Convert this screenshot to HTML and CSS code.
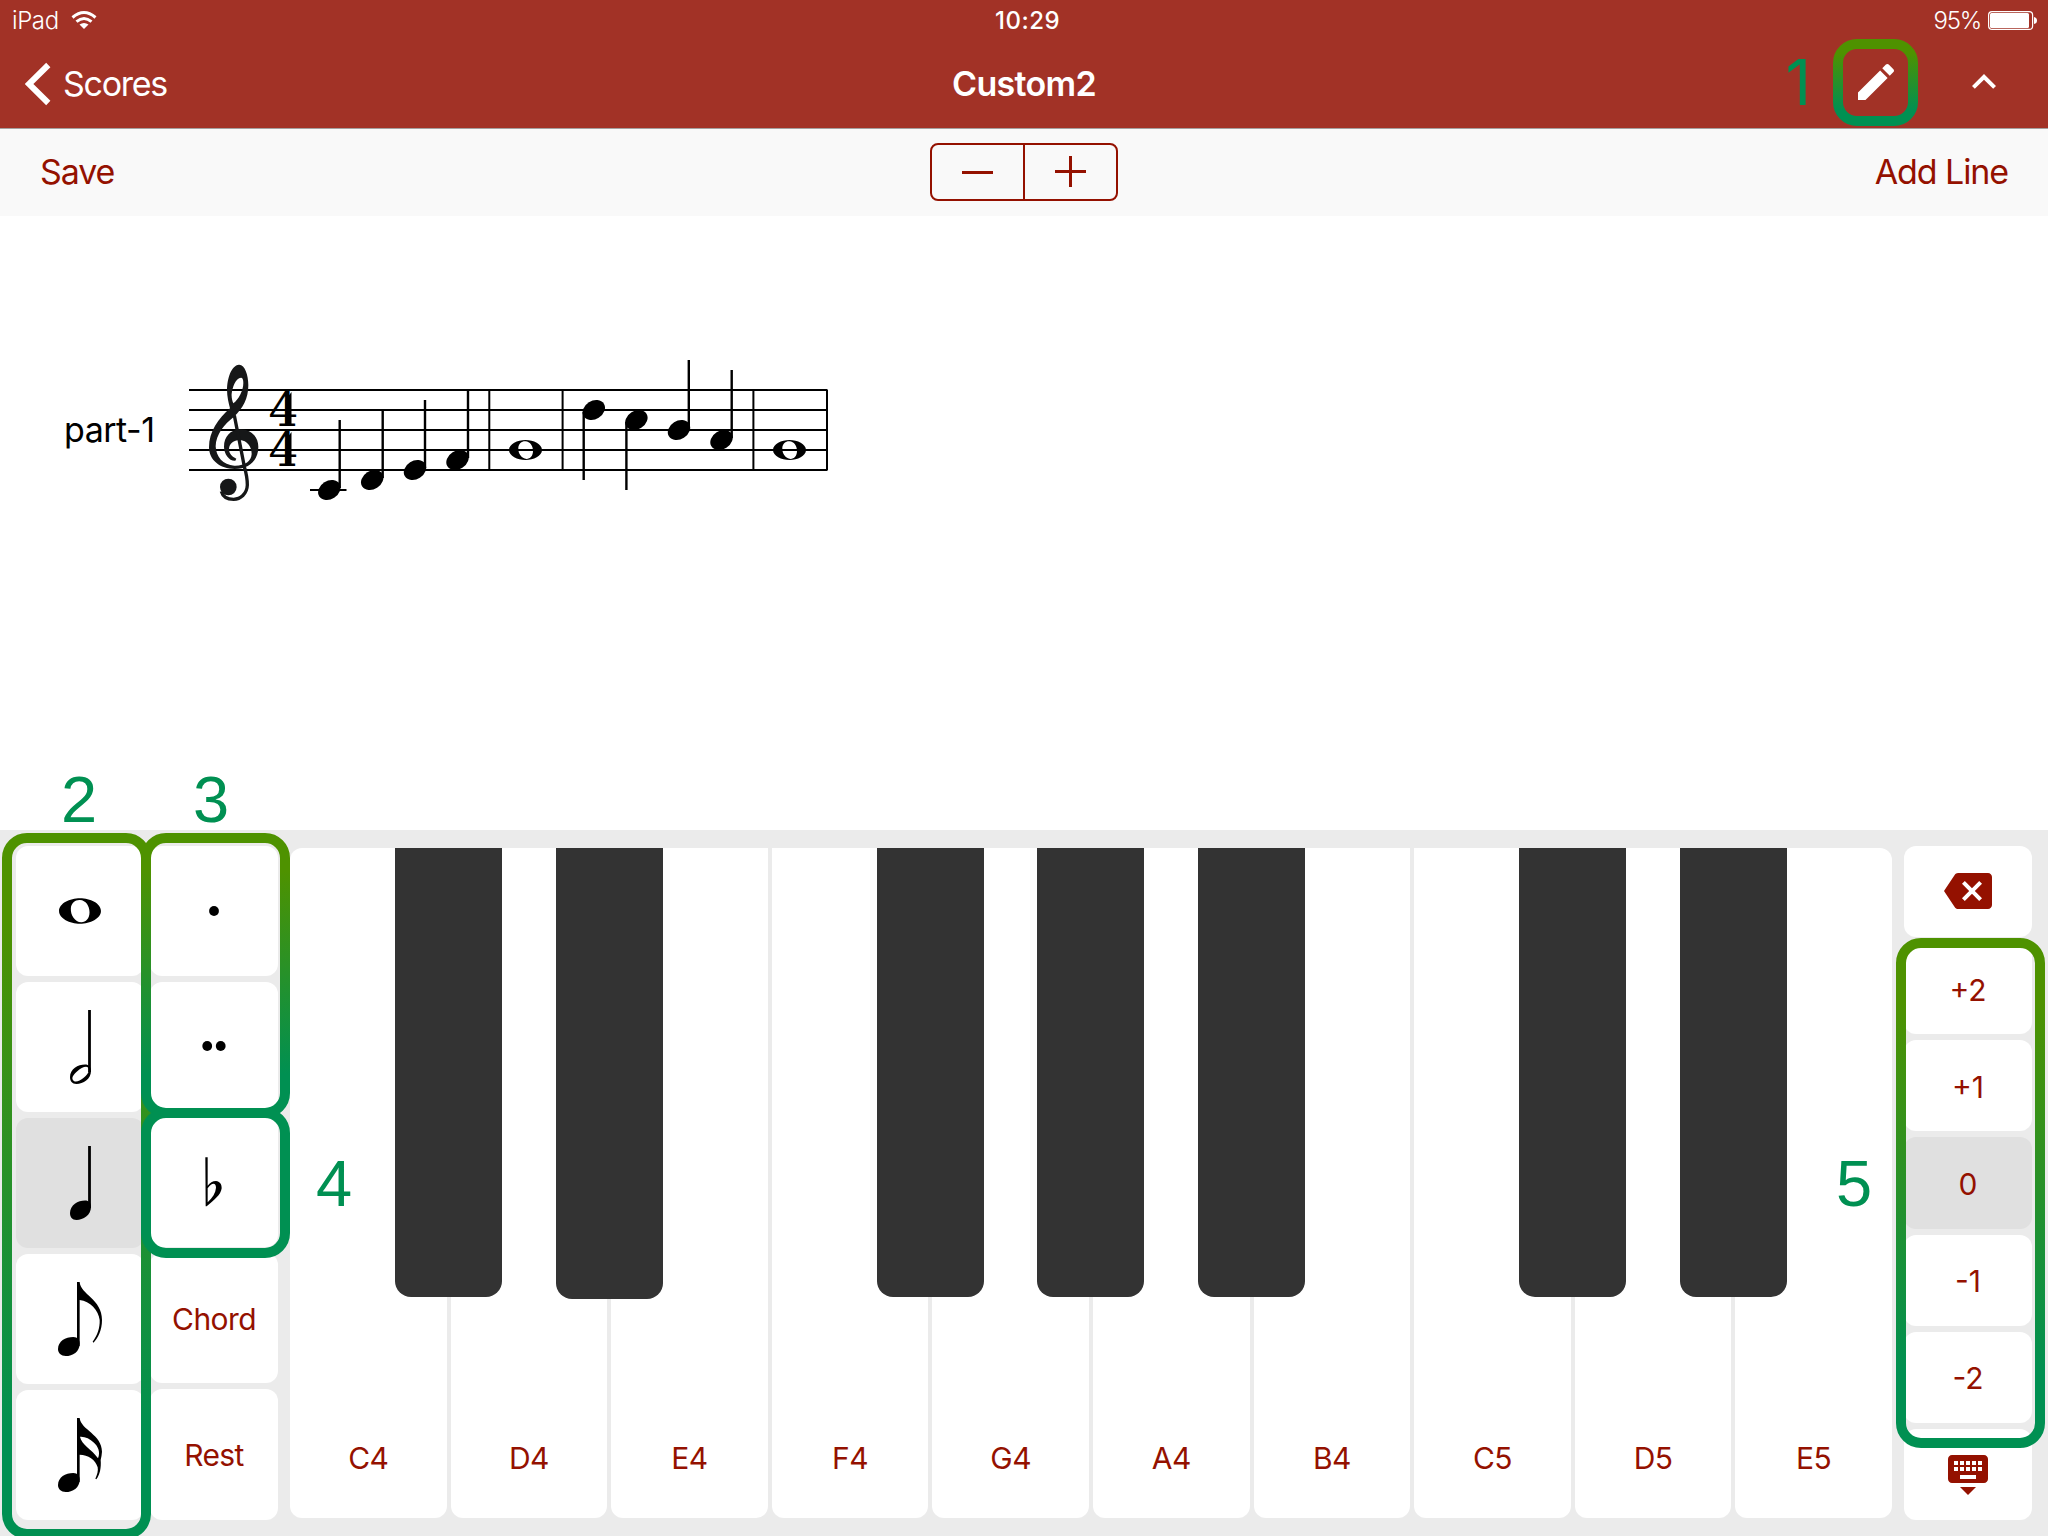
FILE: index.html
```html
<!DOCTYPE html>
<html lang="en">
<head>
<meta charset="utf-8">
<title>Custom2</title>
<link rel="stylesheet" href="styles.css">
</head>
<body>
<svg class="defs" width="0" height="0" aria-hidden="true">
  <defs>
    <ellipse id="head" rx="11.9" ry="9.200" transform="rotate(-32)"/>
    <path id="whole" fill-rule="evenodd" d="M-16.500 0C-16.500-6-8-10 0-10S16.500-6 16.500 0 8 10 0 10-16.500 6-16.500 0ZM-7.200-2C-7-6.500-3.500-9 0-8.700 4.500-8.500 7.500-4 7.500 1 7.500 6 4.500 9 1 8.900-4 8.500-7.500 3.500-7.200-2Z"/>
    <linearGradient id="mark" x1="0" y1="0" x2="0" y2="1">
      <stop offset=".12" stop-color="#4e9200"/>
      <stop offset=".86" stop-color="#009052"/>
    </linearGradient>
  </defs>
</svg>
<div class="app">
  <header class="header">
    <div class="status">
      <div class="status-left"><span class="device">iPad</span>
        <svg class="wifi" width="26" height="20" viewBox="0 0 26 20"><g fill="none" stroke="#fff" stroke-width="3"><path d="M1.500 7.500Q13-2.500 24.500 7.500"/><path d="M5.500 11.700Q13 5.200 20.500 11.700"/></g><path fill="#fff" d="M8.500 14.600Q13 11.400 17.500 14.600L13 19Z"/></svg>
      </div>
      <div class="clock">10:29</div>
      <div class="status-right"><span class="percent">95%</span>
        <svg width="50" height="20" viewBox="0 0 50 20"><rect x=".6" y=".6" width="44" height="17.800" rx="3.500" fill="none" stroke="#fff" stroke-width="1.200"/><rect x="2" y="2" width="39" height="15" rx="1.500" fill="#fff"/><path d="M46 6q3 .5 3 3.500t-3 3.500z" fill="#fff"/></svg>
      </div>
    </div>
    <nav class="nav">
      <a class="back"><svg width="26" height="44" viewBox="0 0 26 44"><path d="M23.300 3L4 22l19.300 19" fill="none" stroke="#fff" stroke-width="6"/></svg><span>Scores</span></a>
      <h1 class="title">Custom2</h1>
      <div class="nav-actions">
        <svg width="48" height="48" viewBox="0 0 24 24" fill="#fff"><path d="M3 17.250V21h3.750L17.810 9.940l-3.750-3.750L3 17.250zM20.710 7.040c.39-.39.39-1.020 0-1.410l-2.340-2.340c-.39-.39-1.020-.39-1.410 0l-1.830 1.830 3.750 3.750 1.830-1.830z"/></svg>
        <svg width="48" height="48" viewBox="0 0 24 24" fill="#fff"><path d="M12 8l-6 6 1.410 1.410L12 10.830l4.590 4.580L18 14z"/></svg>
      </div>
    </nav>
  </header>

  <div class="toolbar">
    <button class="link save">Save</button>
    <div class="stepper">
      <button><svg width="32" height="32"><path d="M0 17.500h31" stroke="#941100" stroke-width="3"/></svg></button>
      <button><svg width="32" height="32"><path d="M0 16.500h31M15.500 1v31" stroke="#941100" stroke-width="3"/></svg></button>
    </div>
    <button class="link add">Add Line</button>
  </div>

  <main class="score">
    <div class="part">part-1</div>
    <svg width="660" height="160" viewBox="180 350 660 160">
      <g stroke="#000" stroke-width="2" fill="none">
        <path d="M189 390H827.500M189 410H827.500M189 430H827.500M189 450H827.500M189 470H827.500M310 490H346.500"/>
        <path d="M489.300 390V470M562.600 390V470M753.400 390V470M827 390V470"/>
        <path stroke-width="2.400" d="M339.700 420V488M382.700 410.500V478M425 400V468M468 390V458M583.700 412V480M626.400 422V490M688.800 360V428M731.700 370V438"/>
      </g>
      <g>
        <use href="#head" x="329.300" y="490"/><use href="#head" x="372.200" y="480"/><use href="#head" x="415" y="470"/><use href="#head" x="457.500" y="460"/>
        <use href="#head" x="593.800" y="410"/><use href="#head" x="636.400" y="420"/><use href="#head" x="679" y="430"/><use href="#head" x="721.500" y="440"/>
        <use href="#whole" x="525.500" y="450"/><use href="#whole" x="789.500" y="450"/>
      </g>
      <g transform="translate(50 350) scale(.33333)" fill="#161718">
        <path fill-rule="evenodd" d="M567 44C543 46 531 88 531 118C531 141 536 160 540 175C505 207 477 244 477 292C477 330 510 357 554 357C598 357 625 330 625 291C625 259 602 238 570 238C541 239 522 261 522 290C522 313 539 334 556 332L559 326C546 320 537 311 537 297C538 281 551 270 569 270C592 271 605 290 605 312C604 334 584 348 553 347C519 346 498 320 497 289C498 253 523 222 552 200C579 175 595 145 595 106C595 74 584 43 567 44ZM573 83C557 84 547 112 545 131C544 143 547 153 550 160C566 148 580 122 580 99C580 89 578 83 573 83Z"/>
        <path d="M553 196L583 350Q592 380 592 405C591 432 571 448 551 448C532 448 518 439 514 424" fill="none" stroke="#161718" stroke-width="10"/>
        <ellipse cx="535" cy="411" rx="25" ry="25"/>
      </g>
      <g class="meter"><text x="268.500" y="426" textLength="30" lengthAdjust="spacingAndGlyphs">4</text><text x="268.500" y="466" textLength="30" lengthAdjust="spacingAndGlyphs">4</text></g>
      <path d="M291.500 392v33h-6v-25zM291.500 432v33h-6v-25z"/>
    </svg>
  </main>

  <section class="keyboard">
    <div class="column">
      <button class="key"><svg class="glyph" viewBox="0 0 128 130"><use href="#whole" transform="translate(64 65) scale(1.270)"/></svg></button>
      <button class="key"><svg class="glyph" viewBox="0 0 128 130"><path d="M73.500 28V90" stroke="#000" stroke-width="2.800"/><path fill-rule="evenodd" d="M54 95C54 87 62 82.500 69 82.500C73 82.500 75 85 75 89C75 97 67 102 60.500 102C56 102 54 99 54 95ZM57 98C59 101 63 99.500 68 95.500C73 91 74 88 72 85.500C70 83.500 65 86 61 89.500C57 93 55.500 96 57 98Z"/></svg></button>
      <button class="key active"><svg class="glyph" viewBox="0 0 128 130"><path d="M73.500 28V90" stroke="#000" stroke-width="2.800"/><path d="M54 95C54 87 62 82.500 69 82.500C73 82.500 75 85 75 89C75 97 67 102 60.500 102C56 102 54 99 54 95Z"/></svg></button>
      <button class="key"><svg class="glyph" viewBox="0 0 128 130"><g transform="translate(-16 -154) scale(.33333)"><path d="M231 546H239C241 583 306 597 306 660C306 690 294 716 280 728L278 725C292 706 300 684 299 660C296 631 270 603 239 600V738H231Z"/><path d="M174 747C174 724 196 711 220 711C233 711 239 720 239 731C239 755 218 768 197 768C183 768 174 759 174 747Z"/></g></svg></button>
      <button class="key"><svg class="glyph" viewBox="0 0 128 130"><g transform="translate(-16 -290) scale(.33333)"><path fill-rule="evenodd" d="M231 954H239C243 990 306 1003 306 1055Q305 1068 302 1080C304 1102 300 1124 289 1138L286 1136C292 1124 295 1112 293 1102C287 1079 264 1064 239 1064V1146H231ZM240 1010C244 1034 276 1048 294 1075C302 1056 294 1039 282 1028C269 1015 255 1009 240 1010Z"/><path d="M174 1155C174 1132 196 1119 220 1119C233 1119 239 1128 239 1139C239 1163 218 1176 197 1176C183 1176 174 1167 174 1155Z"/></g></svg></button>
    </div>
    <div class="column">
      <button class="key"><svg class="glyph" viewBox="0 0 128 130"><circle cx="64" cy="65" r="4.900"/></svg></button>
      <button class="key"><svg class="glyph" viewBox="0 0 128 130"><circle cx="57.200" cy="65" r="4.900"/><circle cx="70.700" cy="65" r="4.900"/></svg></button>
      <button class="key"><svg class="glyph" viewBox="0 0 128 130"><g transform="translate(-150 -18) scale(.33333)"><path fill-rule="evenodd" d="M616 175H623V260Q633 246 648 246C659 247 666 256 665 268C663 287 642 304 620 322H617ZM623 268V310C638 296 647 281 648 266C648 248 633 252 623 268Z"/></g></svg></button>
      <button class="key word">Chord</button>
      <button class="key word">Rest</button>
    </div>
    <div class="piano">
      <div class="white"><span>C4</span><i class="black"></i></div>
      <div class="white"><span>D4</span><i class="black long"></i></div>
      <div class="white"><span>E4</span></div>
      <div class="white"><span>F4</span><i class="black"></i></div>
      <div class="white"><span>G4</span><i class="black"></i></div>
      <div class="white"><span>A4</span><i class="black"></i></div>
      <div class="white"><span>B4</span></div>
      <div class="white"><span>C5</span><i class="black"></i></div>
      <div class="white"><span>D5</span><i class="black"></i></div>
      <div class="white"><span>E5</span></div>
    </div>
    <div class="column">
      <button class="key tool"><svg width="48" height="48" viewBox="0 0 24 24" fill="#941100"><path d="M22 3H7c-.69 0-1.230.35-1.590.88L0 12l5.410 8.110c.36.53.9.89 1.590.89h15c1.100 0 2-.9 2-2V5c0-1.100-.9-2-2-2zm-3 12.590L17.590 17 14 13.410 10.410 17 9 15.590 12.590 12 9 8.410 10.410 7 14 10.590 17.590 7 19 8.410 15.410 12 19 15.590z"/></svg></button>
      <button class="key octave">+2</button>
      <button class="key octave">+1</button>
      <button class="key octave active">0</button>
      <button class="key octave">-1</button>
      <button class="key octave">-2</button>
      <button class="key tool"><svg width="48" height="48" viewBox="0 0 24 24" fill="#941100"><path d="M20 3H4c-1.100 0-1.990.9-1.990 2L2 15c0 1.100.9 2 2 2h16c1.100 0 2-.9 2-2V5c0-1.100-.9-2-2-2zm-9 3h2v2h-2V6zm0 3h2v2h-2V9zM8 6h2v2H8V6zm0 3h2v2H8V9zm-1 2H5V9h2v2zm0-3H5V6h2v2zm9 7H8v-2h8v2zm0-4h-2V9h2v2zm0-3h-2V6h2v2zm3 3h-2V9h2v2zm0-3h-2V6h2v2zm-7 15l4-4H8l4 4z"/></svg></button>
    </div>
  </section>

  <svg class="annotations" width="2048" height="1536" viewBox="0 0 2048 1536">
    <g fill="none" stroke="url(#mark)" stroke-width="10">
      <rect x="1838" y="44" width="75" height="77" rx="19"/>
      <rect x="7" y="838" width="139" height="696" rx="20"/>
      <rect x="146" y="838" width="139" height="275" rx="20"/>
      <rect x="146" y="1113" width="139" height="140" rx="20" stroke="#009052"/>
      <rect x="1901" y="943" width="139" height="500" rx="20"/>
    </g>
    <g class="numbers">
      <text class="plain-one" x="1811" y="105">1</text>
      <text x="61" y="822">2</text>
      <text x="193" y="822">3</text>
      <text x="316" y="1206">4</text>
      <text x="1836" y="1206">5</text>
    </g>
  </svg>
</div>
</body>
</html>
```

FILE: styles.css
```css
* { box-sizing: border-box; }

body {
  margin: 0;
  font-family: Inter, "Liberation Sans", sans-serif;
  color: #000;
}

button {
  margin: 0;
  padding: 0;
  border: 0;
  background: none;
  font: inherit;
  color: #941100;
}

svg { display: block; }

.defs { position: absolute; }

.app {
  position: relative;
  display: flex;
  flex-direction: column;
  width: 2048px;
  height: 1536px;
  overflow: hidden;
  background: #fff;
}

.header {
  height: 129px;
  background: #a23226;
  border-bottom: 1px solid #a5a09f;
  color: #fff;
}

.status {
  display: grid;
  grid-template-columns: 1fr auto 1fr;
  align-items: center;
  height: 40px;
  padding: 2px 10px 0 12px;
  font-size: 24px;
  line-height: 38px;
}

.status-left, .status-right {
  display: flex;
  align-items: center;
}

.status-left { gap: 12px; }
.status-right { justify-content: flex-end; gap: 7px; }
.wifi { margin-top: -2px; }
.clock { font-weight: 500; letter-spacing: .5px; padding-left: 5px; }
.percent { font-weight: 300; letter-spacing: -1.2px; }
.device { font-weight: 300; letter-spacing: -.4px; }

.nav {
  display: grid;
  grid-template-columns: 1fr auto 1fr;
  align-items: center;
  height: 88px;
  padding: 0 40px 0 24px;
}

.back {
  display: flex;
  align-items: center;
  gap: 12px;
  padding-left: 1px;
  font-size: 34px;
  letter-spacing: -1.3px;
}

.back span { padding-bottom: 2px; }

.title {
  margin: 0;
  padding-bottom: 2px;
  transform: translateX(8px);
  font-size: 34px;
  font-weight: 600;
  letter-spacing: -.7px;
}

.nav-actions {
  display: flex;
  justify-content: flex-end;
  gap: 60px;
  padding-bottom: 4px;
}

.toolbar {
  display: grid;
  grid-template-columns: 1fr auto 1fr;
  align-items: center;
  height: 87px;
  padding: 0 40px 2px;
  background: #f9f9f9;
}

.link { font-size: 34px; letter-spacing: -1.1px; }
.save { justify-self: start; }
.add { justify-self: end; }

.stepper {
  display: flex;
  width: 188px;
  height: 58px;
  border: 2px solid #941100;
  border-radius: 8px;
}

.stepper button {
  display: flex;
  flex: 1;
  align-items: center;
  justify-content: center;
  padding-bottom: 2px;
}

.stepper button + button { border-left: 2px solid #941100; }

.score {
  display: flex;
  height: 614px;
  padding: 134px 0 0 64px;
}

.part {
  width: 116px;
  padding-top: 59px;
  font-size: 34px;
  line-height: 42px;
  letter-spacing: -.5px;
}

.meter {
  font-family: "DejaVu Serif", serif;
  font-size: 46px;
}

.keyboard {
  display: flex;
  gap: 12px;
  height: 706px;
  padding: 16px;
  background: #ebebeb;
}

.column {
  display: flex;
  flex-direction: column;
  gap: 6px;
  width: 128px;
}

.column:first-child { margin-right: -6px; }

.key {
  display: flex;
  flex: 1 1 0;
  min-height: 0;
  align-items: center;
  justify-content: center;
  border-radius: 12px;
  background: #fff;
  font-size: 30px;
}

.key.word { padding-top: 1px; letter-spacing: -.6px; }
.key.octave { padding-top: 2px; }
.key.tool { padding-bottom: 2px; }
.key.active { background: #e0e0e0; }

.glyph { width: 128px; height: 130px; }

.piano {
  display: grid;
  flex: 1;
  grid-template-columns: repeat(10, 1fr);
  gap: 4px;
  margin: 2px 0;
}

.white {
  position: relative;
  display: flex;
  align-items: flex-end;
  justify-content: center;
  padding-bottom: 42px;
  border-radius: 0 0 12px 12px;
  background: #fff;
  color: #941100;
  font-size: 30px;
  line-height: 36px;
  letter-spacing: -.5px;
}

.white:first-child { border-top-left-radius: 12px; }
.white:last-child { border-top-right-radius: 12px; }

.black {
  position: absolute;
  z-index: 1;
  top: 0;
  left: 105px;
  width: 107px;
  height: 449px;
  border-radius: 0 0 16px 16px;
  background: #333;
}

.black.long { height: 451px; }

.annotations {
  position: absolute;
  z-index: 2;
  top: 0;
  left: 0;
}

.numbers {
  fill: #009052;
  font-family: "Liberation Sans", Arial, sans-serif;
  font-size: 65px;
}

.plain-one {
  font-family: Inter, sans-serif;
  font-size: 63px;
  text-anchor: end;
}
```
